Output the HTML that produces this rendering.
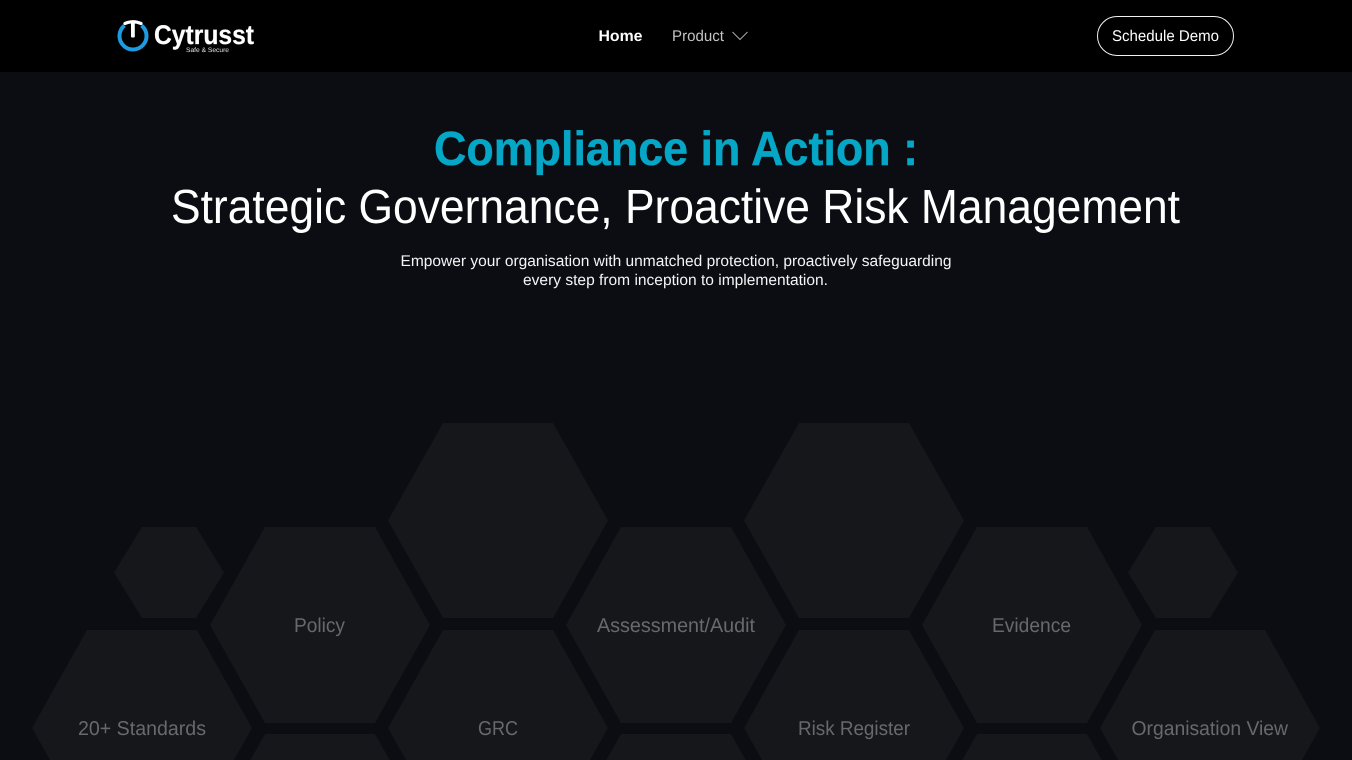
<!DOCTYPE html>
<html lang="en">
<head>
<meta charset="utf-8">
<title>Cytrusst</title>
<style>
html,body{margin:0;padding:0;width:1352px;height:760px;overflow:hidden;background:#0b0d13}
svg{display:block}
text{font-family:"Liberation Sans",sans-serif;text-rendering:geometricPrecision}
</style>
</head>
<body>
<svg width="1352" height="760" viewBox="0 0 1352 760" xmlns="http://www.w3.org/2000/svg">
<rect width="1352" height="760" fill="#0b0d13"/>
<rect width="1352" height="72" fill="#000"/>

<!-- logo -->
<path d="M124.5 25.5A13.5 13.5 0 1 0 141.5 25.5" fill="none" stroke="#1e9be0" stroke-width="4"/>
<path d="M125 23.5Q133 20 141 23.5" fill="none" stroke="#fff" stroke-width="3.2" stroke-linecap="round"/>
<rect x="131" y="22" width="3.8" height="15.5" rx="1" fill="#fff"/>
<text x="154" y="44" font-size="27" font-weight="700" fill="#fff" stroke="#fff" stroke-width="0.2" textLength="100" lengthAdjust="spacingAndGlyphs">Cytrusst</text>
<text x="186" y="52" font-size="6.5" fill="#e6e6e6" textLength="43" lengthAdjust="spacingAndGlyphs">Safe &amp; Secure</text>

<!-- nav -->
<text x="598.5" y="41" font-size="15.5" font-weight="700" fill="#fff" textLength="44" lengthAdjust="spacingAndGlyphs">Home</text>
<text x="672" y="41" font-size="15.5" fill="#c4c4c4" textLength="52" lengthAdjust="spacingAndGlyphs">Product</text>
<path d="M732.5 32L740 39.5L747.5 32" fill="none" stroke="#a8a8a8" stroke-width="1"/>

<!-- button -->
<rect x="1097.5" y="16.5" width="136" height="39" rx="19.5" fill="none" stroke="#f2f2f2" stroke-width="1"/>
<text x="1112" y="41" font-size="15.5" fill="#fff" textLength="107" lengthAdjust="spacingAndGlyphs">Schedule Demo</text>

<!-- heading -->
<text x="434" y="165" font-size="48" font-weight="700" fill="#05a6c6" stroke="#05a6c6" stroke-width="0.4" textLength="484" lengthAdjust="spacingAndGlyphs">Compliance in Action :</text>
<text x="171" y="223" font-size="48" fill="#fff" textLength="1009" lengthAdjust="spacingAndGlyphs">Strategic Governance, Proactive Risk Management</text>
<text x="400.5" y="266" font-size="15.5" fill="#f5f5f5" textLength="551" lengthAdjust="spacingAndGlyphs">Empower your organisation with unmatched protection, proactively safeguarding</text>
<text x="523" y="285" font-size="15.5" fill="#f5f5f5" textLength="305" lengthAdjust="spacingAndGlyphs">every step from inception to implementation.</text>

<!-- hexagons -->
<g fill="#15171b">
<polygon points="142,527 196,527 224,572.5 196,618 142,618 114,572.5"/>
<polygon points="1156,527 1210,527 1238,572.5 1210,618 1156,618 1128,572.5"/>

<polygon points="443,423 553,423 608,520.5 553,618 443,618 388,520.5"/>
<polygon points="799,423 909,423 964,520.5 909,618 799,618 744,520.5"/>

<polygon points="265,527 375,527 430,625 375,723 265,723 210,625"/>
<polygon points="621,527 731,527 786,625 731,723 621,723 566,625"/>
<polygon points="977,527 1087,527 1142,625 1087,723 977,723 922,625"/>

<polygon points="87,630 197,630 252,728 234,760 50,760 32,728"/>
<polygon points="443,630 553,630 608,728 590,760 406,760 388,728"/>
<polygon points="799,630 909,630 964,728 946,760 762,760 744,728"/>
<polygon points="1155,630 1265,630 1320,728 1302,760 1118,760 1100,728"/>

<polygon points="265,734 375,734 389.6,760 250.4,760"/>
<polygon points="621,734 731,734 745.6,760 606.4,760"/>
<polygon points="977,734 1087,734 1101.6,760 962.4,760"/>
</g>

<g fill="#68696c" font-size="20">
<text x="294" y="632" textLength="51" lengthAdjust="spacingAndGlyphs">Policy</text>
<text x="597" y="632" textLength="158" lengthAdjust="spacingAndGlyphs">Assessment/Audit</text>
<text x="992" y="632" textLength="79" lengthAdjust="spacingAndGlyphs">Evidence</text>
<text x="78" y="735" textLength="128" lengthAdjust="spacingAndGlyphs">20+ Standards</text>
<text x="478" y="735" textLength="40" lengthAdjust="spacingAndGlyphs">GRC</text>
<text x="798" y="735" textLength="112" lengthAdjust="spacingAndGlyphs">Risk Register</text>
<text x="1131.5" y="735" textLength="156.5" lengthAdjust="spacingAndGlyphs">Organisation View</text>
</g>
</svg>
</body>
</html>
